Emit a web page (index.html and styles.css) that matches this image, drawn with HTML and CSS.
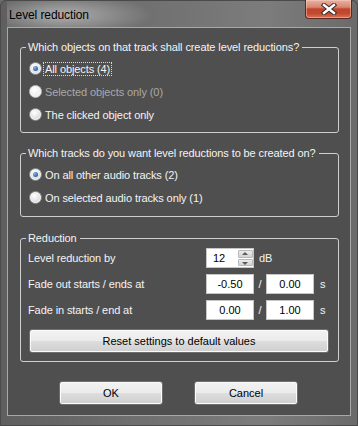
FILE: index.html
```html
<!DOCTYPE html>
<html lang="en">

<head>
    <meta charset="UTF-8">
    <meta name="viewport" content="width=device-width, initial-scale=1.0">
    <title>Level reduction</title>
    <link rel="stylesheet" href="styles.css">
</head>

<body>
    <div class="window">
        <div class="titlebar">
            <span class="title">Level reduction</span>
            <button class="close" type="button">
                <svg width="16" height="12" viewBox="0 0 16 12">
                    <path d="M3 2 L13 10 M13 2 L3 10" stroke="#3a2a28" stroke-width="4.4" stroke-linecap="square"/>
                    <path d="M3 2 L13 10 M13 2 L3 10" stroke="#fff" stroke-width="2.4" stroke-linecap="square"/>
                </svg>
            </button>
        </div>

        <div class="client">
            <fieldset class="group group-objects">
                <legend>Which objects on that track shall create level reductions?</legend>
                <label class="option"><span class="radio checked"></span><span class="focus">All objects (4)</span></label>
                <label class="option disabled"><span class="radio"></span><span>Selected objects only (0)</span></label>
                <label class="option"><span class="radio"></span><span>The clicked object only</span></label>
            </fieldset>

            <fieldset class="group group-tracks">
                <legend>Which tracks do you want level reductions to be created on?</legend>
                <label class="option"><span class="radio checked"></span><span>On all other audio tracks (2)</span></label>
                <label class="option"><span class="radio"></span><span>On selected audio tracks only (1)</span></label>
            </fieldset>

            <fieldset class="group group-reduction">
                <legend>Reduction</legend>
                <div class="fields">
                    <span class="label">Level reduction by</span>
                    <div class="spin">
                        <input class="spin-value" type="text" value="12">
                        <div class="spin-buttons">
                            <span class="spin-up"></span>
                            <span class="spin-down"></span>
                        </div>
                    </div>
                    <span class="unit-db">dB</span>

                    <span class="label">Fade out starts / ends at</span>
                    <input class="num" type="text" value="-0.50">
                    <span class="slash">/</span>
                    <input class="num" type="text" value="0.00">
                    <span class="unit">s</span>

                    <span class="label">Fade in starts / end at</span>
                    <input class="num" type="text" value="0.00">
                    <span class="slash">/</span>
                    <input class="num" type="text" value="1.00">
                    <span class="unit">s</span>
                </div>
                <button class="btn reset" type="button">Reset settings to default values</button>
            </fieldset>

            <div class="actions">
                <button class="btn" type="button">OK</button>
                <button class="btn" type="button">Cancel</button>
            </div>
        </div>
    </div>
</body>
</html>
```

FILE: styles.css
```css
body {
    margin: 0;
    font-family: 'Liberation Sans', Arial, sans-serif;
    font-size: 11px;
    letter-spacing: -0.1px;
    background-color: #6a6a6a;
}

.window {
    width: 358px;
    height: 426px;
    box-sizing: border-box;
    padding: 0 6px 8px 6px;
    border: 1px solid #4a4a4a;
    border-radius: 6px 6px 0 0;
    background: linear-gradient(to right, #5f5f5f, #707070 40%, #7c7c7c 75%, #6a6a6a);
}

.titlebar {
    height: 26px;
    display: flex;
    justify-content: space-between;
    align-items: flex-start;
    background: radial-gradient(ellipse 90px 22px at 55px 14px, rgba(235, 235, 235, 0.55), rgba(235, 235, 235, 0) 100%);
}

.title {
    margin: 7px 0 0 2px;
    color: #000;
    font-size: 12px;
}

.close {
    width: 47px;
    height: 19px;
    margin: -1px -1px 0 0;
    padding: 0;
    display: flex;
    align-items: center;
    justify-content: center;
    border: 1px solid #5a2a22;
    border-top: none;
    border-radius: 0 0 4px 4px;
    background: linear-gradient(to bottom, #e8b2a4 0%, #d88670 40%, #c2432a 50%, #c24a30 75%, #d9745a 100%);
    box-shadow: inset 0 0 0 1px rgba(255, 210, 200, 0.45);
}

.client {
    height: 389px;
    box-sizing: border-box;
    border: 1px solid #a8a8a8;
    background-color: #4f4f4f;
    color: #f4f4f4;
    padding: 0 11px 0 12px;
}

.group {
    margin: 0;
    border: 1px solid #cfcfcf;
    border-radius: 3px;
    padding: 3px 6px 6px 7px;
    min-width: 0;
}

.group legend {
    padding: 0 3px 0 2px;
    margin-left: -2px;
    line-height: 14px;
    white-space: nowrap;
}

.group-objects {
    margin-top: 12px;
}

.group-tracks {
    margin-top: 13px;
    padding-bottom: 7px;
}

.group-reduction {
    margin-top: 14px;
    padding-top: 0;
    padding-bottom: 8px;
}

.option {
    height: 23px;
    display: flex;
    align-items: center;
    gap: 3px;
}

.option.disabled {
    color: #a9a9a9;
}

.focus {
    outline: 1px dotted #d8d8d8;
    outline-offset: 0;
    padding: 0 1px;
    margin-left: -1px;
}

.radio {
    width: 11px;
    height: 11px;
    margin-left: 1px;
    border: 1px solid #8e8f8f;
    border-radius: 50%;
    background: radial-gradient(circle at 40% 35%, #ffffff, #e2e2e2 55%, #c4c4c4);
    box-shadow: inset 0 0 0 1px #f4f4f4;
    position: relative;
}

.option.disabled .radio {
    border-color: #c4c4c4;
    background: radial-gradient(circle at 40% 35%, #ffffff, #f0f0f0 60%, #e0e0e0);
}

.radio.checked::after {
    content: '';
    position: absolute;
    left: 3px;
    top: 3px;
    width: 5px;
    height: 5px;
    border-radius: 50%;
    background: radial-gradient(circle at 35% 35%, #8cb6e8, #2b5fa8 70%, #1d3f78);
}

.fields {
    display: grid;
    grid-template-columns: 178px 48px 12px 48px auto;
    grid-auto-rows: 26px;
    align-items: center;
}

.label {
    grid-column: 1;
}

.spin {
    grid-column: 2;
    width: 48px;
    height: 20px;
    display: flex;
    box-sizing: border-box;
    border: 1px solid #c6c6c6;
    background-color: #fff;
}

.spin-value {
    width: 31px;
    border: none;
    padding: 0 0 0 6px;
    box-sizing: border-box;
    font-family: inherit;
    font-size: 11px;
    color: #000;
    outline: none;
}

.spin-buttons {
    width: 15px;
    display: flex;
    flex-direction: column;
    padding: 1px 0 1px 0;
    gap: 1px;
}

.spin-up,
.spin-down {
    flex: 1;
    position: relative;
    background: linear-gradient(to bottom, #ececec, #d2d2d2);
    border: 1px solid #b8b8b8;
    border-radius: 1px;
}

.spin-up::after,
.spin-down::after {
    content: '';
    position: absolute;
    left: 3px;
    border-left: 3px solid transparent;
    border-right: 3px solid transparent;
}

.spin-up::after {
    top: 1px;
    border-bottom: 3px solid #5a5a5a;
}

.spin-down::after {
    top: 2px;
    border-top: 3px solid #5a5a5a;
}

.unit-db {
    grid-column: 3 / span 2;
    padding-left: 5px;
}

.num {
    width: 48px;
    height: 20px;
    box-sizing: border-box;
    border: 1px solid #c6c6c6;
    padding: 0;
    text-align: center;
    font-family: inherit;
    font-size: 11px;
    color: #000;
    outline: none;
}

.slash {
    text-align: center;
}

.unit {
    padding-left: 6px;
}

.btn {
    height: 24px;
    padding: 0;
    border: 1px solid #6f6f6f;
    border-radius: 3px;
    background: linear-gradient(to bottom, #f2f2f2 0%, #ebebeb 50%, #dddddd 51%, #cfcfcf 100%);
    box-shadow: inset 0 0 0 1px #fbfbfb;
    font-family: inherit;
    font-size: 11px;
    color: #000;
}

.reset {
    display: block;
    width: 300px;
    margin: 6px 0 0 1px;
}

.actions {
    margin-top: 19px;
    display: flex;
    justify-content: center;
    gap: 31px;
    padding-right: 2px;
}

.actions .btn {
    width: 104px;
}
```
